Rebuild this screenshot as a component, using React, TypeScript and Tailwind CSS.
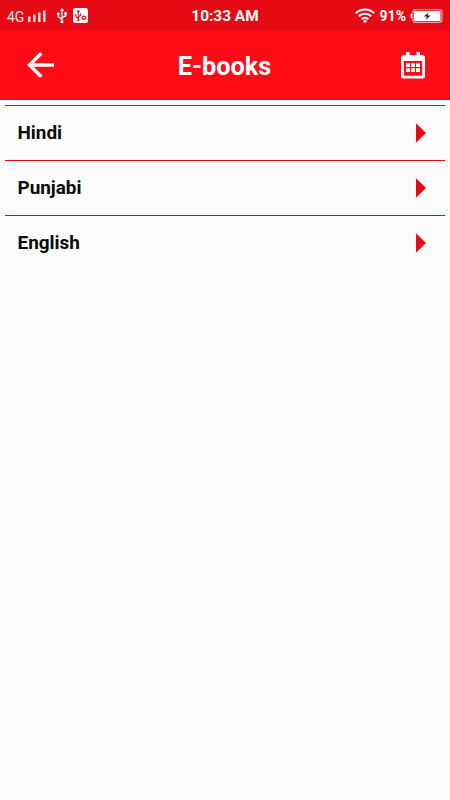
// E-books language list screen

import type { ReactNode } from 'react';

const languages = ['Hindi', 'Punjabi', 'English'];

function SignalIcon() {
  return (
    <svg width="18" height="12" viewBox="0 0 18 12" fill="#fff" fillOpacity="0.85">
      <rect x="0" y="6.5" width="2.5" height="5.5" />
      <rect x="5" y="4.5" width="2.5" height="7.5" />
      <rect x="10" y="2.5" width="2.5" height="9.5" />
      <rect x="15" y="0.5" width="2.5" height="11.5" />
    </svg>
  );
}

function UsbIcon() {
  return (
    <svg width="12" height="16" viewBox="0 0 12 16" fill="none" stroke="#fff" strokeWidth="1.3">
      <path d="M6 2v11M6 11.3 2.3 8.8V6.5M6 9.8l3.7-2V5.5" />
      <path d="M6 0 8.2 3H3.8z" fill="#fff" stroke="none" />
      <circle cx="2.3" cy="5.8" r="1.5" fill="#fff" stroke="none" />
      <rect x="8.3" y="4.2" width="2.8" height="2.8" fill="#fff" stroke="none" />
      <circle cx="6" cy="13.8" r="1.5" fill="#fff" stroke="none" />
    </svg>
  );
}

function UsbBadgeIcon() {
  return (
    <svg width="15" height="15" viewBox="0 0 15 15" fill="none" stroke="#e60a14">
      <rect width="15" height="15" rx="2.5" fill="#fff" stroke="none" />
      <path d="M5.3 3v9M5.3 10.5 2.8 8.5V6M5.3 9l2.4-1.8V5.2" strokeWidth="1.1" />
      <path d="M5.3 1.6 7 4H3.6z" fill="#e60a14" stroke="none" />
      <circle cx="5.3" cy="12.2" r="1.1" fill="#e60a14" stroke="none" />
      <circle cx="10.8" cy="9.8" r="1.7" strokeWidth="1.3" />
    </svg>
  );
}

function WifiIcon() {
  return (
    <svg width="20" height="15" viewBox="0 0 20 15" fill="none" stroke="#fff" strokeWidth="2">
      <path d="M.8 5.200a13 13 0 0 1 18.400 0" />
      <path d="M3.800 8.300a8.800 8.800 0 0 1 12.400 0" />
      <path d="M6.700 11.200a4.700 4.700 0 0 1 6.600 0" />
      <circle cx="10" cy="13.200" r="1.600" fill="#fff" stroke="none" />
    </svg>
  );
}

function BatteryIcon() {
  return (
    <svg width="33" height="14" viewBox="0 0 33 14">
      <path d="M2.2 4.5v5C.9 9.3.3 8.4.3 7S.9 4.700 2.200 4.500z" fill="#fff" />
      <rect x="3" y="0.7" width="29" height="12.6" rx="2" fill="none" stroke="#ff9da1" strokeWidth="1.2" />
      <rect x="4" y="2" width="26.5" height="10" fill="#fff" />
      <path d="M18.500 3.500 13.800 7.600h3L15.800 10.700 20.600 6.500h-3z" fill="#222" />
    </svg>
  );
}

function BackIcon() {
  return (
    <svg width="28" height="28" viewBox="0 0 28 28" fill="none" stroke="#fff" strokeWidth="3.4">
      <path d="M27 14H3M14.300 2.200 2.500 14l11.800 11.800" />
    </svg>
  );
}

function CalendarIcon() {
  return (
    <svg width="24" height="27" viewBox="0 0 24 27" fill="#fff">
      <path
        fillRule="evenodd"
        d="M5 0h3.500v3h7V0H19v3h2.500A2.500 2.500 0 0 1 24 5.500v18.500a2.500 2.500 0 0 1-2.500 2.500h-19A2.500 2.500 0 0 1 0 24V5.500A2.500 2.500 0 0 1 2.500 3H5zM2.800 9v14.700h18.400V9z"
      />
      <path d="M5 11.300h4v3.700H5zM10 11.300h4v3.700h-4zM15 11.300h4v3.700h-4zM5 16.300h4V20H5zM10 16.300h4V20h-4zM15 16.300h4V20h-4z" />
    </svg>
  );
}

function StatusBar() {
  return (
    <div className="grid h-[30px] grid-cols-[1fr_auto_1fr] items-center bg-[#e60a14] pt-px pr-[7px] pl-[7px] text-white">
      <div className="flex items-center">
        <span className="w-[21px] pt-[2px] text-[14px] leading-4 tracking-[-0.2px] opacity-90">4G</span>
        <SignalIcon />
        <span className="ml-[10px]">
          <UsbIcon />
        </span>
        <span className="ml-[5px]">
          <UsbBadgeIcon />
        </span>
      </div>
      <span className="text-[15.4px] leading-5 font-bold">10:33 AM</span>
      <div className="flex items-center justify-end">
        <WifiIcon />
        <span className="ml-[5px] text-[14px] leading-5 font-bold">91%</span>
        <span className="ml-1">
          <BatteryIcon />
        </span>
      </div>
    </div>
  );
}

interface HeaderButtonProps {
  label: string;
  children: ReactNode;
}

function HeaderButton({ label, children }: HeaderButtonProps) {
  return (
    <button aria-label={label} className="flex items-center">
      {children}
    </button>
  );
}

export default function App() {
  return (
    <div className="min-h-screen bg-[#fbfbfb] font-[Roboto,sans-serif]">
      <StatusBar />
      <header className="grid h-[70px] grid-cols-[1fr_auto_1fr] items-center bg-[#ff0b17] pr-[25px] pl-[27px] text-white">
        <HeaderButton label="Back">
          <BackIcon />
        </HeaderButton>
        <h1 className="pt-[3px] pr-[3px] text-[25.3px] leading-8 font-bold">E-books</h1>
        <div className="flex justify-end">
          <HeaderButton label="Calendar">
            <CalendarIcon />
          </HeaderButton>
        </div>
      </header>
      <ul className="px-[5px] pt-[5px]">
        {languages.map((language) => (
          <li
            key={language}
            className="flex h-[55px] items-center justify-between border-t border-[#d9060c] pr-[19px] pl-[12.5px] text-[18.9px] font-bold text-[#0a0a0a]"
          >
            {language}
            <svg width="10" height="20" viewBox="0 0 10 20" fill="#e60a14">
              <path d="M0 .3 10 10 0 19.700z" />
            </svg>
          </li>
        ))}
      </ul>
    </div>
  );
}
